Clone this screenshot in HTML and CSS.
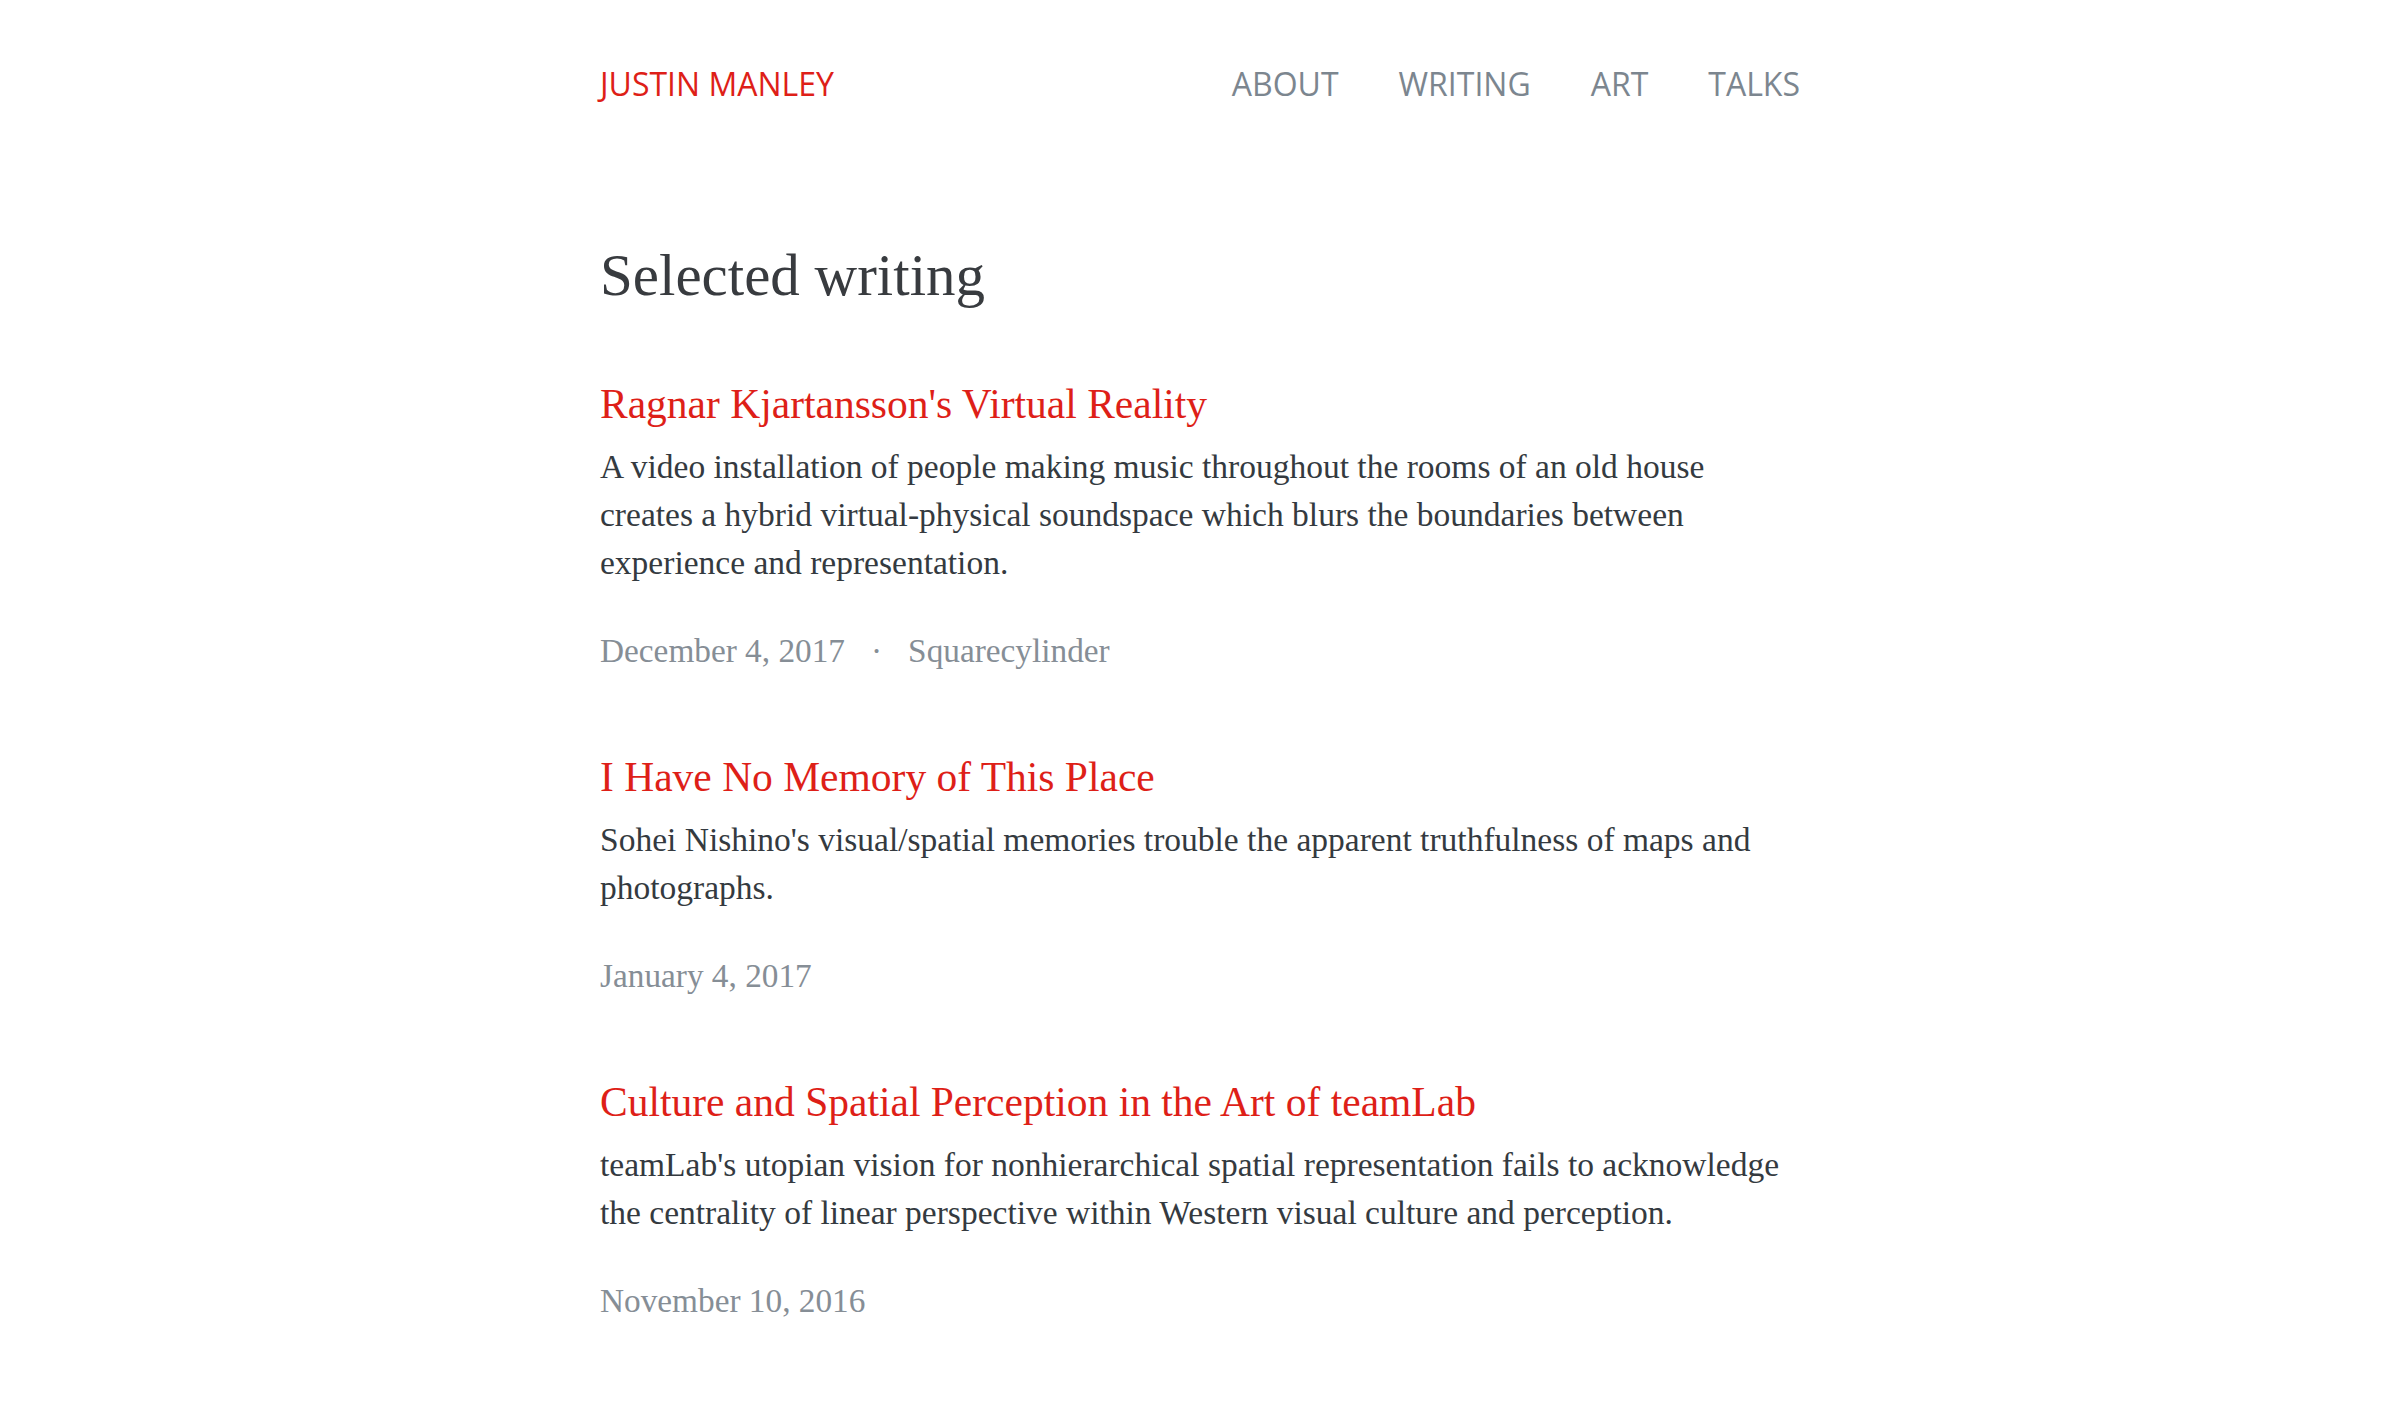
FILE: index.html
```html
<!DOCTYPE html>
<html lang="en">
<head>
<meta charset="utf-8">
<title>Selected writing — Justin Manley</title>
<link rel="stylesheet" href="styles.css">
</head>
<body>
<div class="container">
  <header class="site-header">
    <a class="brand" href="#">JUSTIN MANLEY</a>
    <nav class="nav">
      <a href="#">ABOUT</a>
      <a href="#">WRITING</a>
      <a href="#">ART</a>
      <a href="#">TALKS</a>
    </nav>
  </header>
  <main>
    <h1 class="page-title">Selected writing</h1>
    <article class="entry">
      <h2 class="entry-title"><a href="#">Ragnar Kjartansson's Virtual Reality</a></h2>
      <p class="entry-summary">A video installation of people making music throughout the rooms of an old house creates a hybrid virtual-physical soundspace which blurs the boundaries between experience and representation.</p>
      <p class="entry-meta"><span>December 4, 2017</span><span class="sep">·</span><span>Squarecylinder</span></p>
    </article>
    <article class="entry">
      <h2 class="entry-title"><a href="#">I Have No Memory of This Place</a></h2>
      <p class="entry-summary">Sohei Nishino's visual/spatial memories trouble the apparent truthfulness of maps and photographs.</p>
      <p class="entry-meta"><span>January 4, 2017</span></p>
    </article>
    <article class="entry">
      <h2 class="entry-title"><a href="#">Culture and Spatial Perception in the Art of teamLab</a></h2>
      <p class="entry-summary">teamLab's utopian vision for nonhierarchical spatial representation fails to acknowledge the centrality of linear perspective within Western visual culture and perception.</p>
      <p class="entry-meta"><span>November 10, 2016</span></p>
    </article>
  </main>
</div>
</body>
</html>
```

FILE: styles.css
```css
html, body {
  margin: 0;
  padding: 0;
  background: #ffffff;
}

body {
  font-family: "Liberation Serif", "Times New Roman", serif;
  color: #343a40;
}

a {
  text-decoration: none;
}

.container {
  width: 1200px;
  margin: 0 auto;
}

.site-header {
  display: flex;
  justify-content: space-between;
  align-items: baseline;
  padding-top: 61px;
  font-family: "Open Sans", "Liberation Sans", sans-serif;
  font-size: 32px;
  line-height: 45px;
}

.brand {
  color: #de1f18;
}

.nav {
  display: flex;
  gap: 60px;
}

.nav a {
  color: #7c868f;
}

.page-title {
  margin: 134px 0 0;
  font-size: 59px;
  line-height: 71px;
  font-weight: normal;
  color: #383b3f;
}

.entry {
  margin-top: 69px;
}

.entry + .entry {
  margin-top: 78px;
}

.entry-title {
  margin: 0;
  font-size: 41.5px;
  line-height: 48px;
  font-weight: normal;
}

.entry-title a {
  color: #de1f18;
}

.entry-summary {
  margin: 15px 0 0;
  font-size: 33.5px;
  line-height: 48px;
  color: #343a40;
}

.entry-meta {
  margin: 40px 0 0;
  font-size: 33.3px;
  line-height: 48px;
  color: #868e96;
}

.entry-meta .sep {
  margin: 0 26px;
}
```
